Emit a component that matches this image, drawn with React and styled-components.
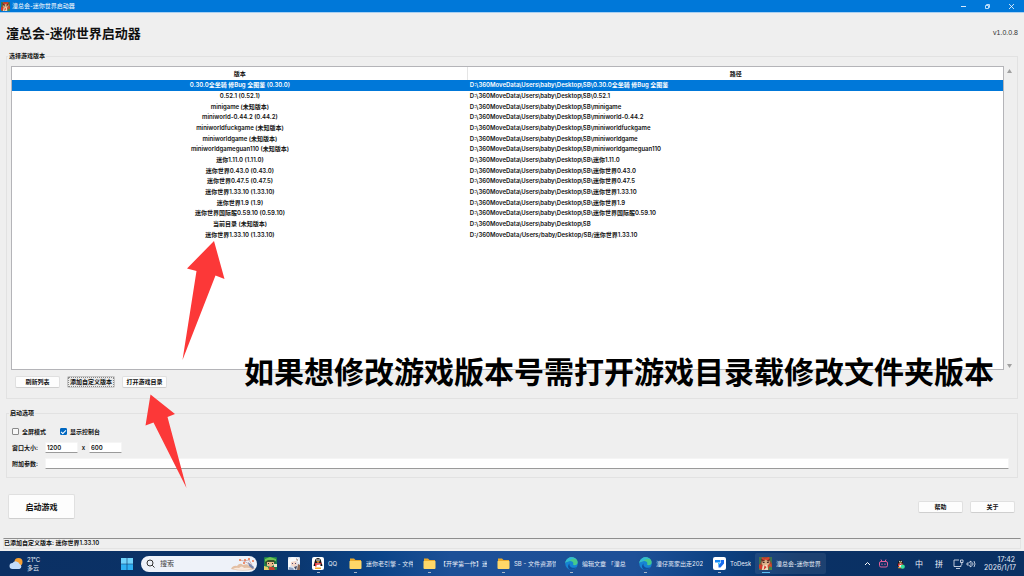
import React, { useState } from "react";
import styled, { createGlobalStyle } from "styled-components";

const GlobalStyle = createGlobalStyle`
  * {
    box-sizing: border-box;
  }
  body {
    margin: 0;
    background: #efefef;
    color: #111;
    font-family: Inter, "Noto Sans CJK SC", sans-serif;
    font-size: 6px;
    line-height: 8px;
  }
  button, input {
    font: inherit;
    color: inherit;
  }
`;

const Desktop = styled.div`
  position: relative;
  display: flex;
  flex-direction: column;
  min-height: 100vh;
  overflow: hidden;
`;

const TitleBar = styled.header`
  display: flex;
  align-items: center;
  height: 13px;
  padding: 0 1px;
  background: #0078d9;
  border-bottom: 1px solid #a9d0f2;
  color: #fff;
  span {
    flex: 1;
    margin-left: 2px;
  }
`;

const WindowButton = styled.button`
  display: flex;
  justify-content: center;
  width: 24px;
  padding: 0;
  border: none;
  background: none;
`;

const Main = styled.main`
  flex: 1;
  display: flex;
  flex-direction: column;
  padding: 0 6px;
  font-weight: 600;
`;

const Heading = styled.div`
  display: flex;
  align-items: center;
  justify-content: space-between;
  height: 39px;
  h1 {
    margin: 0;
    font-family: "Noto Sans CJK SC", sans-serif;
    font-size: 13px;
    line-height: 16px;
    font-weight: 700;
  }
  span {
    font-family: "Liberation Sans", sans-serif;
    font-size: 7px;
    font-weight: 400;
    color: #333;
  }
`;

const Group = styled.fieldset`
  display: flex;
  flex-direction: column;
  gap: ${({ $list }) => ($list ? "6px" : "5px")};
  min-width: 0;
  margin: 0;
  padding: ${({ $list }) => ($list ? "6px 3px 10px 4px" : "9px 8px 8px 5px")};
  border: 1px solid #e2e2e2;
  & + & {
    margin-top: 10px;
  }
  legend {
    margin-left: -3px;
    padding: 0 1px;
    line-height: 8px;
  }
`;

const ListArea = styled.div`
  display: flex;
  min-height: calc(100vh - 272px);
`;

const ListBox = styled.div`
  flex: 1;
  background: #fff;
  border: 1px solid #b4b4b8;
`;

const Scroll = styled.div`
  width: 10px;
  display: flex;
  flex-direction: column;
  justify-content: space-between;
  align-items: center;
  padding: 3px 0 2px;
`;

const Table = styled.table`
  width: 100%;
  height: 173px;
  border-collapse: collapse;
  table-layout: fixed;
  line-height: 8px;
  th {
    height: 13px;
    padding: 0;
    font-weight: 600;
  }
  th:first-child {
    width: 46%;
    border-right: 1px solid #e5e5e5;
  }
  td {
    padding: 0 2px;
    white-space: nowrap;
  }
  td:first-child {
    text-align: center;
  }
`;

const Row = styled.tr`
  background: ${({ $selected }) => ($selected ? "#0078d9" : "transparent")};
  color: ${({ $selected }) => ($selected ? "#fff" : "#111")};
`;

const Buttons = styled.div`
  display: flex;
  gap: 7px;
  padding-left: 4px;
`;

const Button = styled.button`
  min-width: ${({ $large }) => ($large ? "67px" : "45px")};
  height: ${({ $large }) => ($large ? "25px" : "12px")};
  padding: 0 2px;
  background: ${({ $focused }) => ($focused ? "#e9e9e9" : "#fdfdfd")};
  border: 1px solid ${({ $focused }) => ($focused ? "#c4c4c4" : "#e0e0e0")};
  border-bottom-color: #cfcfcf;
  border-radius: 2px;
  font-size: ${({ $large }) => ($large ? "8px" : "6px")};
  font-weight: 600;
  line-height: 8px;
  outline: ${({ $focused }) => ($focused ? "1px dotted #888" : "none")};
  outline-offset: -2px;
`;

const Line = styled.div`
  display: flex;
  align-items: center;
  height: 11px;
`;

const Check = styled.label`
  display: flex;
  align-items: center;
  gap: 3px;
  margin-right: 14px;
  input {
    appearance: none;
    display: flex;
    justify-content: center;
    width: 7px;
    height: 7px;
    margin: 0;
    border: 1px solid #8a8a8a;
    border-radius: 1px;
    background: #f8f8f8;
  }
  input:checked {
    background: #0067c0;
    border-color: #0067c0;
  }
  input:checked::after {
    content: "";
    width: 2px;
    height: 4px;
    border: solid #fff;
    border-width: 0 1px 1px 0;
    transform: rotate(45deg);
  }
`;

const FieldLabel = styled.label`
  width: 33px;
`;

const Times = styled.label`
  width: 11px;
  text-align: center;
`;

const Field = styled.input`
  flex: ${({ $wide }) => ($wide ? "1" : "none")};
  width: 33px;
  height: 11px;
  padding: 0 1px;
  background: #fff;
  border: 1px solid #f5f5f5;
  border-bottom-color: #9a9a9a;
  border-radius: 1px;
`;

const Actions = styled.div`
  display: flex;
  align-items: center;
  gap: 7px;
  padding: 16px 3px 17px 2px;
  button:first-child {
    margin-right: auto;
  }
`;

const Status = styled.footer`
  height: 11px;
  margin: 0 3px 2px;
  border: 1px solid #e4e4e4;
  border-top: 1px solid #8e8e8e;
  font-weight: 600;
`;

const Bar = styled.nav`
  display: flex;
  align-items: center;
  height: 25px;
  padding: 0 9px;
  color: #e8eef8;
  background: linear-gradient(90deg, #0b3064 0%, #0a3368 26%, #0b4488 37%, #1d5097 44%, #1e5098 62%, #0d4283 70%, #0a3165 78%, #0a3062 100%);
`;

const Weather = styled.div`
  display: flex;
  align-items: center;
  gap: 3px;
  width: 112px;
`;

const Search = styled.label`
  display: flex;
  align-items: center;
  gap: 5px;
  width: 116px;
  height: 16px;
  margin: 0 7px 0 8px;
  padding: 0 1px 0 5px;
  border-radius: 8px;
  background: #eef2f9;
  input {
    flex: 1;
    min-width: 0;
    padding: 0;
    border: none;
    background: none;
    font-size: 7px;
  }
  input::placeholder {
    color: #444;
  }
`;

const Task = styled.button`
  display: flex;
  align-items: center;
  gap: 4px;
  height: 21px;
  margin-right: ${({ $gap }) => $gap || 10}px;
  padding: 0;
  border: none;
  border-radius: 2px;
  background: none;
  color: inherit;
  ${({ $active }) =>
    $active && "padding: 0 4px; background: rgba(255, 255, 255, 0.08);"}
`;

const TaskIcon = styled.span`
  display: flex;
  flex-direction: column;
  align-items: center;
  gap: 2px;
  padding-top: 3px;
  &::after {
    content: "";
    width: ${({ $active }) => ($active ? "8px" : "3px")};
    height: 1px;
    background: ${({ $active, $running }) =>
      $active ? "#5cc0f5" : $running ? "#a9b6c9" : "transparent"};
  }
`;

const TaskLabel = styled.span`
  width: ${({ $width }) => $width}px;
  overflow: hidden;
  white-space: nowrap;
  text-align: left;
`;

const Tray = styled.div`
  display: flex;
  align-items: center;
  gap: 8px;
  margin-left: auto;
  span {
    font-size: 8px;
    line-height: 10px;
    margin: 0 2px;
  }
`;

const Clock = styled.time`
  width: 31px;
  font-size: 7px;
  text-align: right;
  white-space: nowrap;
`;

const Caption = styled.p`
  position: absolute;
  left: 244px;
  top: 350px;
  margin: 0;
  font-family: "Noto Sans CJK SC", sans-serif;
  font-size: 30px;
  line-height: 40px;
  font-weight: 700;
  color: #000;
  white-space: nowrap;
`;

const Arrows = styled.svg`
  position: absolute;
  left: 140px;
  top: 240px;
  pointer-events: none;
`;

const AppIcon = ({ size = 9 }) => (
  <svg width={size} height={size} viewBox="0 0 14 14">
    <rect width="14" height="14" rx="1" fill="#9c4a30" />
    <path d="M0 0h4L3 4 1 8H0zM11 0h3v7l-2-3z" fill="#3f7350" />
    <path d="M3 0l3 2 5-2v3L8 5 3 4z" fill="#d9432f" />
    <path d="M3 4l4-1 5 1-1 4-3 2-5-2z" fill="#dcb088" />
    <path d="M2 2l5 2-4 1zM8 4l4-2-1 3z" fill="#6d2f22" />
    <path d="M4 5h2v1.500H4zM8.500 5h2v1.500h-2z" fill="#402822" />
    <path d="M0 8l4 1-1 5H0z" fill="#d63a2b" />
    <path d="M9 9l4-2 1 5-3 2z" fill="#d34a30" />
    <path d="M4 9l5-1 1 6H3z" fill="#eedbb9" />
    <path d="M6 9l2 2-3 3z" fill="#d5302a" />
    <path d="M11 10l3 1v3h-4zM0 12l3 2H0z" fill="#49864a" />
  </svg>
);

const GreenGame = () => (
  <svg width="13" height="13" viewBox="0 0 13 13">
    <rect width="13" height="13" rx="1" fill="#1d7f4e" />
    <path d="M1 2l5-2 6 2v2L6 3 1 5z" fill="#6fc452" />
    <path d="M1 5l3-2h6l2 3-3-1H4L2 8z" fill="#39512c" />
    <path d="M3 5h7v3l-3 2-4-1z" fill="#e9b88a" />
    <path d="M4 6h1v1H4zM8 6h1v1H8z" fill="#33221c" />
    <path d="M0 9l4 1 1 3H0z" fill="#e5ce68" />
    <path d="M5 10h5l1 3H5z" fill="#c54130" />
    <path d="M10 7h3v3h-3z" fill="#efe7c8" />
  </svg>
);

const Anime = () => (
  <svg width="12" height="13" viewBox="0 0 12 13">
    <rect width="12" height="13" rx="1" fill="#dfe4ef" />
    <path d="M0 3l4-3 6 1 2 5-3-2-5 1-2 5H0z" fill="#f9fafc" />
    <path d="M3 5l5-1 1 4-3 2-3-2z" fill="#f5d7c8" />
    <path d="M4 6h1v1H4zM7 6h1v1H7z" fill="#554b76" />
    <path d="M8 1l2 2-1 1zM10 7l2 1v5h-3z" fill="#8a6655" />
    <path d="M1 10l4 1 1 2H1z" fill="#8b9fc2" />
    <path d="M6 10l3-1-1 4z" fill="#3f465f" />
  </svg>
);

const Penguin = () => (
  <g>
    <path d="M2 7C3 5 2.500 1 6 1s3 4 4 6c1 2 0 2 0 2H2S1 9 2 7z" fill="#171717" />
    <ellipse cx="6" cy="8" rx="2.500" ry="2.500" fill="#fff" />
    <ellipse cx="5" cy="3" rx=".7" ry="1" fill="#fff" />
    <ellipse cx="7" cy="3" rx=".7" ry="1" fill="#fff" />
    <path d="M4 4.500q2-.8 4 0-2 1.500-4 0zM3 10.500h6V12H3z" fill="#f3a52b" />
    <path d="M2.500 5.500q3.500 1.700 7 0v1.200q-3 1.500-5 .8v2H3V7z" fill="#e22d2d" />
  </g>
);

const QQIcon = () => (
  <svg width="12" height="13" viewBox="0 0 12 13">
    <rect width="12" height="13" rx="2" fill="#fff" />
    <Penguin />
  </svg>
);

const Folder = () => (
  <svg width="13" height="13" viewBox="0 0 13 13">
    <path d="M1 1.500h4L6.500 3H12v8H1z" fill="#e9a92c" />
    <path d="M1 4h11q.5 0 .5.500V11q0 1-1 1h-10q-1 0-1-1V4.500q0-.5.500-.5z" fill="#ffd768" />
  </svg>
);

const Edge = () => (
  <svg width="13" height="13" viewBox="0 0 13 13">
    <circle cx="6.500" cy="6.500" r="6.300" fill="#1684d3" />
    <path d="M.3 6C.8 2 4 .2 6.700.2c3.500 0 6 2.500 6 5 0 2-1.500 3-3.200 3-1.500 0-1.700-.8-1.200-1.500C8.600 5 7 4 5 4 3 4 1 5 .3 6z" fill="#47c98c" />
    <path d="M.3 6C1 2 4 .2 6.700.2c2 0 3.500.8 4.500 2C8 1 6 2 5 4 3 4 1 5 .3 6z" fill="#33b9d4" />
    <path d="M4.500 6.500C4 9 6 11 9 10.800c1 0 2-.5 2.500-.8-2 3-5 3-6.500 2.500C2.500 11.500 2.500 8 4.500 6.500z" fill="#104f9e" />
  </svg>
);

const ToDesk = () => (
  <svg width="13" height="13" viewBox="0 0 13 13">
    <rect width="13" height="13" rx="2" fill="#fff" />
    <path d="M2 3h5.500v2.500H2z" fill="#1689f5" />
    <path d="M8 3h3v3.500L7.500 10.500H5.500V8L8 5.500z" fill="#176cf0" />
    <path d="M5 6h2L5 8.500z" fill="#29c7f2" />
  </svg>
);

const versions = [
  ["0.30.0全坐骑 修Bug 全图鉴 (0.30.0)", "D:\\360MoveData\\Users\\baby\\Desktop\\SB\\0.30.0全坐骑 修Bug 全图鉴"],
  ["0.52.1 (0.52.1)", "D:\\360MoveData\\Users\\baby\\Desktop\\SB\\0.52.1"],
  ["minigame (未知版本)", "D:\\360MoveData\\Users\\baby\\Desktop\\SB\\minigame"],
  ["miniworld-0.44.2 (0.44.2)", "D:\\360MoveData\\Users\\baby\\Desktop\\SB\\miniworld-0.44.2"],
  ["miniworldfuckgame (未知版本)", "D:\\360MoveData\\Users\\baby\\Desktop\\SB\\miniworldfuckgame"],
  ["miniworldgame (未知版本)", "D:\\360MoveData\\Users\\baby\\Desktop\\SB\\miniworldgame"],
  ["miniworldgameguan110 (未知版本)", "D:\\360MoveData\\Users\\baby\\Desktop\\SB\\miniworldgameguan110"],
  ["迷你1.11.0 (1.11.0)", "D:\\360MoveData\\Users\\baby\\Desktop\\SB\\迷你1.11.0"],
  ["迷你世界0.43.0 (0.43.0)", "D:\\360MoveData\\Users\\baby\\Desktop\\SB\\迷你世界0.43.0"],
  ["迷你世界0.47.5 (0.47.5)", "D:\\360MoveData\\Users\\baby\\Desktop\\SB\\迷你世界0.47.5"],
  ["迷你世界1.33.10 (1.33.10)", "D:\\360MoveData\\Users\\baby\\Desktop\\SB\\迷你世界1.33.10"],
  ["迷你世界1.9 (1.9)", "D:\\360MoveData\\Users\\baby\\Desktop\\SB\\迷你世界1.9"],
  ["迷你世界国际服0.59.10 (0.59.10)", "D:\\360MoveData\\Users\\baby\\Desktop\\SB\\迷你世界国际服0.59.10"],
  ["当前目录 (未知版本)", "D:\\360MoveData\\Users\\baby\\Desktop\\SB"],
  ["迷你世界1.33.10 (1.33.10)", "D:/360MoveData/Users/baby/Desktop/SB/迷你世界1.33.10"],
];

const tasks = [
  { icon: <GreenGame />, gap: 11 },
  { icon: <Anime />, gap: 12 },
  { icon: <QQIcon />, label: "QQ", width: 12, gap: 9, running: true },
  { icon: <Folder />, label: "迷你老引擎 - 文件", width: 47, running: true },
  { icon: <Folder />, label: "【开学第一作】迷", width: 47, running: true },
  { icon: <Folder />, label: "SB - 文件资源管", width: 42, gap: 9, running: true },
  { icon: <Edge />, label: "编辑文章 「潼总", width: 47, running: true },
  { icon: <Edge />, label: "潼仔离家出走202", width: 47, running: true },
  { icon: <ToDesk />, label: "ToDesk", width: 21, gap: 4, running: true },
  { icon: <AppIcon size={13} />, label: "潼总会-迷你世界", width: 46, active: true },
];

function Taskbar() {
  return (
    <Bar>
      <Weather>
        <svg width="15" height="13" viewBox="0 0 15 13">
          <circle cx="9.500" cy="5" r="4" fill="#f6a033" />
          <path d="M3.500 12a3 3 0 0 1 0-6 4 4 0 0 1 7 1 2.600 2.600 0 0 1 0 5z" fill="#c4dcf8" />
        </svg>
        <div>
          21°C
          <br />
          多云
        </div>
      </Weather>
      <svg width="12" height="12" viewBox="0 0 12 12">
        <path d="M0 0h5.700v5.700H0zM6.300 0H12v5.700H6.300z" fill="#70d3fb" />
        <path d="M0 6.300h5.700V12H0zM6.300 6.300H12V12H6.300z" fill="#2fb0f2" />
      </svg>
      <Search>
        <svg width="9" height="9" viewBox="0 0 9 9" fill="none" stroke="#333">
          <circle cx="4" cy="4" r="3" />
          <path d="M6.200 6.200l2.300 2.300" />
        </svg>
        <input type="search" placeholder="搜索" aria-label="搜索" />
        <svg width="26" height="14" viewBox="0 0 26 14">
          <path d="M1 12q2-4 6-3 3-4 6-1 5-2 6 1 4 0 6 3-12 3-24 0z" fill="#e3bfa4" />
          <path d="M3 12q3-2 6-1 3-3 5 0 4-1 8 1-9 2-19 0z" fill="#f8e9df" />
          <path d="M10 3l4 1 5-1 3 5M14 4l5 3" fill="none" stroke="#b98a86" strokeWidth=".6" />
          <path d="M18 5l6 5-1 2-4-3z" fill="#7684ac" />
          <g fill="#ec7046">
            <circle cx="10" cy="3" r="1" />
            <circle cx="15" cy="3" r="1" />
            <circle cx="19" cy="2" r="1" />
            <circle cx="23" cy="4" r="1" />
            <circle cx="14" cy="6" r="1" />
          </g>
        </svg>
      </Search>
      {tasks.map((task, i) => (
        <Task key={i} $gap={task.gap} $active={task.active} aria-label={task.label || "应用"}>
          <TaskIcon $active={task.active} $running={task.running}>
            {task.icon}
          </TaskIcon>
          {task.label && <TaskLabel $width={task.width}>{task.label}</TaskLabel>}
        </Task>
      ))}
      <Tray>
        <svg width="7" height="8" viewBox="0 0 7 8" fill="none" stroke="#fff">
          <path d="M1 5l2.500-2.500L6 5" />
        </svg>
        <svg width="9" height="9" viewBox="0 0 9 9" fill="none" stroke="#e0609a">
          <rect x=".5" y="2.500" width="8" height="5.500" rx="1.500" />
          <path d="M2 .5l1 2M7 .5l-1 2M3 4.500v1.500M6 4.500v1.500" />
        </svg>
        <svg width="9" height="10" viewBox="0 0 12 13">
          <Penguin />
          <circle cx="9" cy="10" r="2.800" fill="#3ae09a" />
        </svg>
        <span>中</span>
        <span>拼</span>
        <svg width="23" height="10" viewBox="0 0 23 10" fill="none" stroke="#e8eef8" strokeWidth=".8">
          <path d="M6 1H1v6.500h7V6M3 9.500h4M7.500 1h2.500v2.500H7.500zM8.800 3.500V6" />
          <path d="M14 4h1.500L18 2v6l-2.500-2H14zM19.500 3.500q1 1.500 0 3M21 2q2 3 0 6" />
        </svg>
        <Clock>
          17:42
          <br />
          2026/1/17
        </Clock>
      </Tray>
    </Bar>
  );
}

function App() {
  const [selected, setSelected] = useState(0);
  const [fullscreen, setFullscreen] = useState(false);
  const [showConsole, setShowConsole] = useState(true);

  return (
    <Desktop>
      <GlobalStyle />
      <TitleBar>
        <AppIcon />
        <span>潼总会-迷你世界启动器</span>
        <WindowButton aria-label="最小化">
          <svg width="7" height="7" stroke="#d5eaff" fill="none">
            <path d="M1 3.500h5" />
          </svg>
        </WindowButton>
        <WindowButton aria-label="还原">
          <svg width="7" height="7" viewBox="0 0 7 7" stroke="#b9dcfa" fill="none">
            <path d="M1.500 2.500h3v3h-3zM2.500 2V1.500h3v3H5" />
          </svg>
        </WindowButton>
        <WindowButton aria-label="关闭">
          <svg width="7" height="7" viewBox="0 0 7 7" stroke="#fff" fill="none">
            <path d="M1 1l5 5M6 1L1 6" strokeWidth=".8" />
          </svg>
        </WindowButton>
      </TitleBar>

      <Main>
        <Heading>
          <h1>潼总会-迷你世界启动器</h1>
          <span>v1.0.0.8</span>
        </Heading>

        <Group $list>
          <legend>选择游戏版本</legend>
          <ListArea>
            <ListBox>
              <Table>
                <thead>
                  <tr>
                    <th>版本</th>
                    <th>路径</th>
                  </tr>
                </thead>
                <tbody>
                  {versions.map(([name, path], i) => (
                    <Row key={i} $selected={i === selected} onClick={() => setSelected(i)}>
                      <td>{name}</td>
                      <td>{path}</td>
                    </Row>
                  ))}
                </tbody>
              </Table>
            </ListBox>
            <Scroll>
              <svg width="5" height="4" viewBox="0 0 5 4" fill="#a0a0a0">
                <path d="M2.500 0L5 4H0z" />
              </svg>
              <svg width="5" height="4" viewBox="0 0 5 4" fill="#a0a0a0">
                <path d="M0 0h5L2.500 4z" />
              </svg>
            </Scroll>
          </ListArea>
          <Buttons>
            <Button>刷新列表</Button>
            <Button $focused>添加自定义版本</Button>
            <Button>打开游戏目录</Button>
          </Buttons>
        </Group>

        <Group>
          <legend>启动选项</legend>
          <Line>
            <Check>
              <input
                type="checkbox"
                checked={fullscreen}
                onChange={(e) => setFullscreen(e.target.checked)}
              />
              全屏模式
            </Check>
            <Check>
              <input
                type="checkbox"
                checked={showConsole}
                onChange={(e) => setShowConsole(e.target.checked)}
              />
              显示控制台
            </Check>
          </Line>
          <Line>
            <FieldLabel htmlFor="width">窗口大小:</FieldLabel>
            <Field id="width" type="text" defaultValue="1200" />
            <Times htmlFor="height">x</Times>
            <Field id="height" type="text" defaultValue="600" />
          </Line>
          <Line>
            <FieldLabel htmlFor="args">附加参数:</FieldLabel>
            <Field id="args" type="text" $wide />
          </Line>
        </Group>

        <Actions>
          <Button $large>启动游戏</Button>
          <Button>帮助</Button>
          <Button>关于</Button>
        </Actions>
      </Main>

      <Status>已添加自定义版本: 迷你世界1.33.10</Status>
      <Taskbar />

      <Arrows width="90" height="250" viewBox="140 240 90 250" fill="#fc3838">
        <path d="M214 241L224.500 279l-9-3.500-33 84.500 14-89-9.500-2.500z" />
        <path d="M150.500 394.500L175 414l-7.500 3 19 71-33-65.500-8 3z" />
      </Arrows>
      <Caption>如果想修改游戏版本号需打开游戏目录载修改文件夹版本</Caption>
    </Desktop>
  );
}

export default App;
